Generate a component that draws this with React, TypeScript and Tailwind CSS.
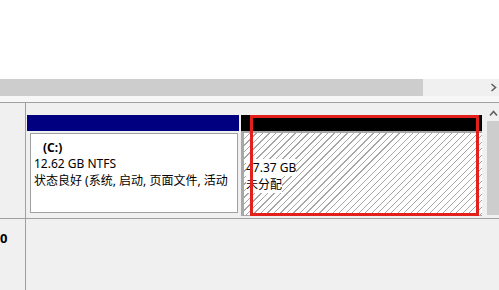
import React from "react";

const Chevron = ({ dir }: { dir: "right" | "up" }) => (
  <svg width="9" height="9" viewBox="0 0 9 9" className="block">
    {dir === "right" ? (
      <path d="M2.5 1 L6.5 4.5 L2.5 8" fill="none" stroke="#606060" strokeWidth="1.6" />
    ) : (
      <path d="M1 6.5 L4.5 2.5 L8 6.5" fill="none" stroke="#606060" strokeWidth="1.6" />
    )}
  </svg>
);

export default function App() {
  const font = "font-['Segoe_UI','Noto_Sans','Noto_Sans_CJK_SC',sans-serif]";
  return (
    <div className={`w-[499px] h-[290px] bg-white overflow-hidden flex flex-col text-black text-[12px] leading-[15px] ${font}`}>
      <div className="h-[79px] bg-white shrink-0" />
      {/* horizontal scrollbar */}
      <div className="h-[17px] shrink-0 flex bg-[#f0f0f0]">
        <div className="w-[423px] bg-[#cdcdcd]" />
        <div className="flex-1" />
        <div className="w-[12px] flex items-center justify-center">
          <Chevron dir="right" />
        </div>
      </div>
      <div className="h-[6px] shrink-0 bg-[#f7f7f7]" />
      <div className="h-px shrink-0 bg-[#a0a0a0]" />
      {/* disk row */}
      <div className="h-[116px] shrink-0 flex bg-[#f0f0f0] border-b border-[#a0a0a0] relative">
        <div className="w-[26px] shrink-0 bg-[#f0f0f0] border-r border-[#a0a0a0]" />
        <div className="w-[1px] shrink-0" />
        <div className="flex flex-col pt-[12px]">
          <div className="flex h-[16px]">
            <div className="w-[212px] bg-[#000080]" />
            <div className="w-[2px]" />
            <div className="w-[241px] bg-black" />
          </div>
          <div className="flex h-[85px]">
            <div className="w-[214px] bg-[#f0f0f0] pt-[2px] pl-[3px] pr-[3px] pb-[3px]">
              <div className="h-full bg-white border border-[#a0a0a0] pl-[3px] pt-[6px]">
                <div className="pl-[9px] font-bold">(C:)</div>
                <div className="mt-[1px]">12.62 GB NTFS</div>
                <div className="mt-[2px] whitespace-nowrap">状态良好 (系统, 启动, 页面文件, 活动</div>
              </div>
            </div>
            <div className="w-[241px] bg-[#a8a8a8] pl-[3px] pt-[2px] pb-[1px]">
              <div className="h-full bg-[repeating-linear-gradient(135deg,#ffffff_0px,#ffffff_3.8px,#a6a6a6_3.8px,#a6a6a6_4.6px)] pt-[27px] pl-[2px]">
                <div><span className="bg-white">47.37 GB</span></div>
                <div className="mt-[2px]"><span className="bg-white">未分配</span></div>
              </div>
            </div>
          </div>
        </div>
        <div className="flex-1" />
        <div className="w-[12px] shrink-0 flex flex-col">
          <div className="h-[18px] flex items-end justify-center pb-[3px]">
            <Chevron dir="up" />
          </div>
          <div className="h-[94px] bg-[#cdcdcd]" />
        </div>
        {/* red highlight overlay */}
        <div className="absolute left-[250px] top-[12px] w-[229px] h-[101px] border-[3px] border-[#e4201c]" />
      </div>
      {/* next disk row */}
      <div className="flex-1 flex bg-[#f0f0f0]">
        <div className="w-[26px] shrink-0 border-r border-[#a0a0a0] pt-[12px] font-bold text-[13px] overflow-hidden">0</div>
        <div className="flex-1" />
      </div>
    </div>
  );
}
